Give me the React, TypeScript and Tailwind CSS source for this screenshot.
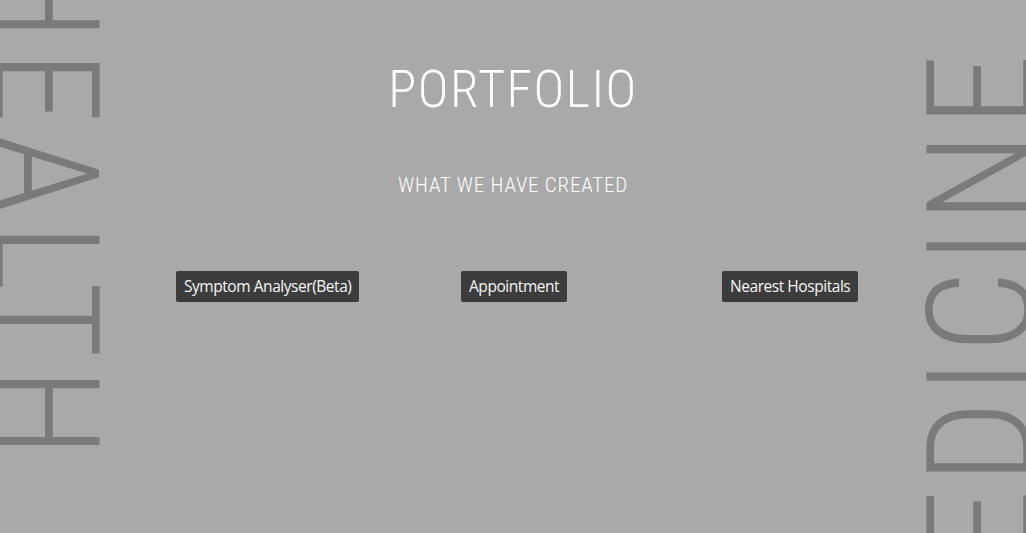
const condensed = "font-['Roboto_Condensed','Roboto',sans-serif]"

function SideWord({ word, side }: { word: string; side: 'left' | 'right' }) {
  const pos =
    side === 'left'
      ? 'left-[-29px] top-[-49px] tracking-[10px]'
      : 'right-[-29px] top-[48px] rotate-180 tracking-[6px]'
  return (
    <div
      className={`pointer-events-none absolute ${pos} ${condensed} select-none text-[146px] font-light leading-none text-[#7a7a7a] [writing-mode:vertical-rl]`}
    >
      {word}
    </div>
  )
}

function PortfolioButton({ label }: { label: string }) {
  return (
    <button className="flex h-[31px] items-center rounded-[2px] bg-[#3c3c3c] px-2 font-['Open_Sans',sans-serif] text-[15.5px] tracking-[-0.45px] text-[#f5f5f5]">
      {label}
    </button>
  )
}

function App() {
  return (
    <div className="relative h-screen overflow-hidden bg-[#a9a9a9]">
      <SideWord word="HEALTH" side="left" />
      <SideWord word="MEDICINE" side="right" />

      <div className="relative flex flex-col items-center pt-[64px]">
        <h1 className={`${condensed} text-[52px] font-light leading-none tracking-[1.5px] text-white`}>
          PORTFOLIO
        </h1>
        <h2 className={`${condensed} mt-[59px] text-[21px] font-light leading-none tracking-[0.8px] text-white`}>
          WHAT WE HAVE CREATED
        </h2>
      </div>

      <div className="relative mt-[75px] grid grid-cols-[285px_261px_auto] pl-[176px]">
        <div>
          <PortfolioButton label="Symptom Analyser(Beta)" />
        </div>
        <div>
          <PortfolioButton label="Appointment" />
        </div>
        <div>
          <PortfolioButton label="Nearest Hospitals" />
        </div>
      </div>
    </div>
  )
}

export default App
